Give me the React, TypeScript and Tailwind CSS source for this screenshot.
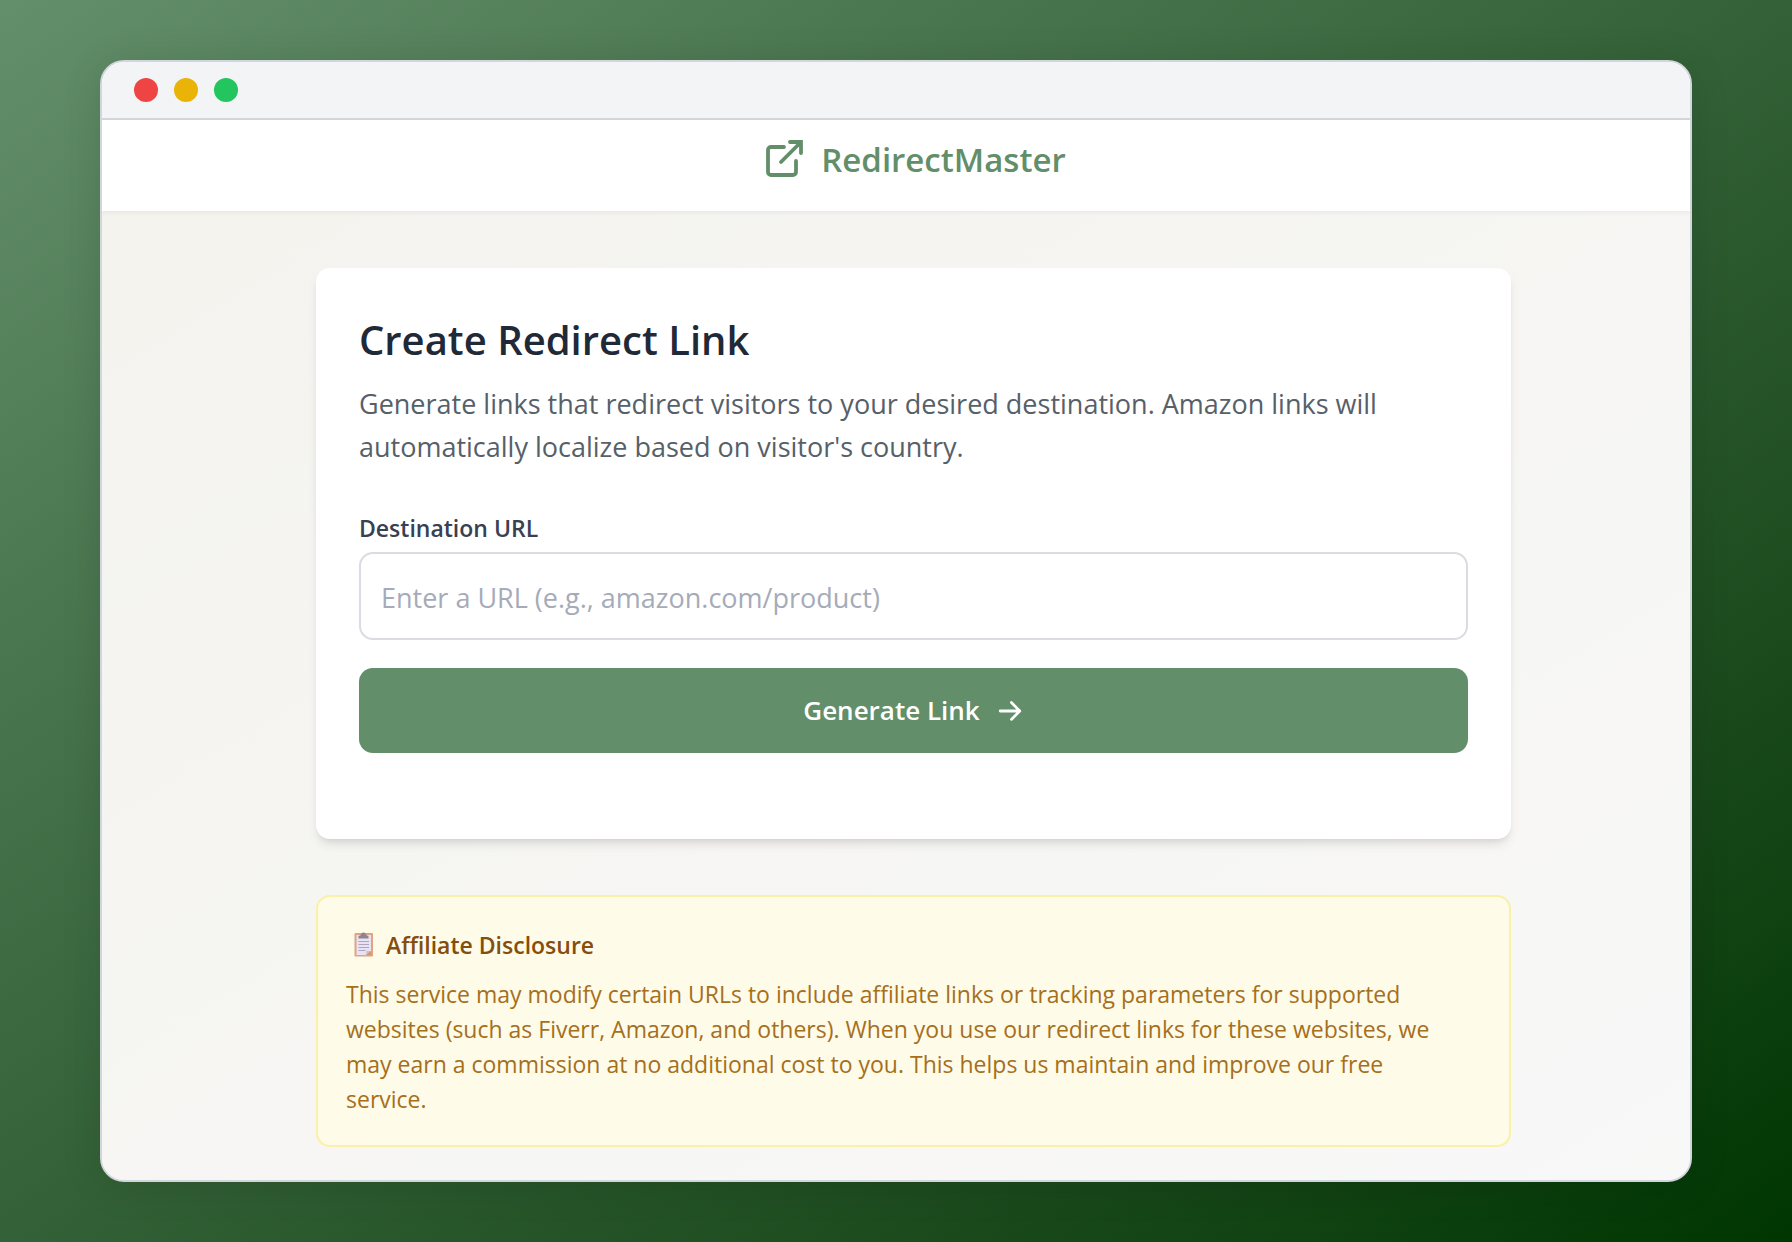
import { useState } from "react";

const windowDots = [
  { name: "close", className: "bg-[#ef4444]" },
  { name: "minimize", className: "bg-[#eab308]" },
  { name: "maximize", className: "bg-[#22c55e]" },
];

function ExternalLinkIcon() {
  return (
    <svg
      aria-hidden="true"
      className="size-12"
      viewBox="0 0 24 24"
      fill="none"
      stroke="currentColor"
      strokeWidth={1.9}
      strokeLinecap="round"
    >
      <path d="M11.500 6H5a1.500 1.500 0 0 0-1.500 1.500V18.500A1.500 1.500 0 0 0 5 20h11a1.500 1.500 0 0 0 1.500-1.500v-5.500" />
      <path d="M14.500 3.500H20V9M20 3.500l-10 10" />
    </svg>
  );
}

function ArrowIcon() {
  return (
    <svg aria-hidden="true" className="size-7" viewBox="0 0 20 20" fill="currentColor">
      <path
        fillRule="evenodd"
        clipRule="evenodd"
        d="M10.293 3.293a1 1 0 0 1 1.414 0l6 6a1 1 0 0 1 0 1.414l-6 6a1 1 0 0 1-1.414-1.414L14.586 11H3a1 1 0 1 1 0-2h11.586l-4.293-4.293a1 1 0 0 1 0-1.414z"
      />
    </svg>
  );
}

function ClipboardIcon() {
  return (
    <svg aria-hidden="true" className="h-[26px] w-5" viewBox="0 0 20 26">
      <rect x="0.5" y="1" width="18.500" height="23.500" rx="1" fill="#dfa583" />
      <path d="M2.500 3h14.500v16l-4.500 4H2.500z" fill="#e9e2f2" />
      <path d="M12 23l0.500-4H17z" fill="#cdbbd6" />
      <path d="M17 19v4h-5z" fill="#dc9468" />
      <path d="M4.500 9.500h10.500M4.500 12.500h10.500M4.500 15.500h10.500M4.500 18.500h7" stroke="#b0a5c0" />
      <path d="M4.500 6.500V4L7 3a2.500 2.500 0 0 1 5 0l2.500 1v2.500z" fill="#8d8496" />
    </svg>
  );
}

function Header() {
  return (
    <header className="relative flex h-[91px] justify-center bg-white pt-3 pl-[35px] shadow-[0_2px_4px_rgba(0,0,0,0.05)]">
      <a href="#" className="flex h-[54px] items-center gap-3 text-[#628e6a]">
        <ExternalLinkIcon />
        <span className="text-[33px] leading-none font-semibold">RedirectMaster</span>
      </a>
    </header>
  );
}

function RedirectForm() {
  const [url, setUrl] = useState("");

  return (
    <section className="rounded-[14px] bg-white px-[43px] pt-[42px] pb-[86px] shadow-[0_7px_11px_-2px_rgba(0,0,0,0.1),0_4px_7px_-4px_rgba(0,0,0,0.1)]">
      <h1 className="text-[40px] leading-[60px] font-semibold text-[#1f2937]">
        Create Redirect Link
      </h1>
      <p className="mt-3 text-[27px] leading-[43px] text-[#566069]">
        Generate links that redirect visitors to your desired destination. Amazon links will
        automatically localize based on visitor's country.
      </p>
      <form className="mt-[42px]" onSubmit={(event) => event.preventDefault()}>
        <label htmlFor="url" className="block text-[23px] leading-9 font-semibold text-[#374151]">
          Destination URL
        </label>
        <input
          id="url"
          type="text"
          value={url}
          onChange={(event) => setUrl(event.target.value)}
          placeholder="Enter a URL (e.g., amazon.com/product)"
          className="mt-[6px] block h-[88px] w-full rounded-[14px] border-2 border-[#dadce2] px-5 pt-[2px] text-[27px] placeholder:text-[#a5abb8]"
        />
        <button
          type="submit"
          className="mt-7 flex h-[85px] w-full items-center justify-center gap-4 rounded-[14px] bg-[#628e6a] text-[26px] font-semibold text-white"
        >
          Generate Link
          <ArrowIcon />
        </button>
      </form>
    </section>
  );
}

function AffiliateDisclosure() {
  return (
    <section className="mt-14 rounded-[14px] border-2 border-[#fbf0a8] bg-[#fefbe8] pt-7 pr-12 pb-7 pl-7">
      <h2 className="flex items-center gap-3 pl-2 text-[23px] leading-10 font-semibold text-[#854d0e]">
        <ClipboardIcon />
        Affiliate Disclosure
      </h2>
      <p className="mt-3 text-[23px] leading-[35px] text-[#a56f1c]">
        This service may modify certain URLs to include affiliate links or tracking parameters for
        supported websites (such as Fiverr, Amazon, and others). When you use our redirect links
        for these websites, we may earn a commission at no additional cost to you. This helps us
        maintain and improve our free service.
      </p>
    </section>
  );
}

export default function App() {
  return (
    <div className="flex min-h-screen flex-col bg-linear-to-br from-[#648f6b] to-[#003602] px-[100px] py-[60px] font-['Open_Sans',sans-serif]">
      <div className="flex flex-1 flex-col overflow-hidden rounded-3xl border-2 border-gray-300 bg-white shadow-[0_4px_40px_rgba(0,0,0,0.12)]">
        <div className="flex h-[58px] items-center gap-4 border-b-2 border-gray-300 bg-gray-100 px-8">
          {windowDots.map((dot) => (
            <span key={dot.name} className={`size-6 rounded-full ${dot.className}`} />
          ))}
        </div>
        <Header />
        <main className="flex-1 bg-linear-to-br from-[#f4f3ee] to-[#f8f8f8] pt-[57px] pb-8 pl-[35px]">
          <div className="mx-auto max-w-[1195px]">
            <RedirectForm />
            <AffiliateDisclosure />
          </div>
        </main>
      </div>
    </div>
  );
}
